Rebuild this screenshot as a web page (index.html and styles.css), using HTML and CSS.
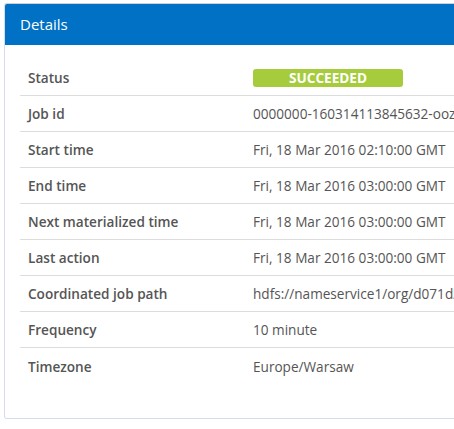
FILE: index.html
```html
<!DOCTYPE html>
<html>
<head>
<meta charset="utf-8">
<link rel="stylesheet" href="styles.css">
</head>
<body>
<div class="card">
  <div class="card-header">Details</div>
  <div class="card-body">
    <div class="row"><div class="label">Status</div><div class="value"><span class="badge">SUCCEEDED</span></div></div>
    <div class="row"><div class="label">Job id</div><div class="value">0000000-160314113845632-oozie-oozi-C</div></div>
    <div class="row"><div class="label">Start time</div><div class="value">Fri, 18 Mar 2016 02:10:00 GMT</div></div>
    <div class="row"><div class="label">End time</div><div class="value">Fri, 18 Mar 2016 03:00:00 GMT</div></div>
    <div class="row"><div class="label">Next materialized time</div><div class="value">Fri, 18 Mar 2016 03:00:00 GMT</div></div>
    <div class="row"><div class="label">Last action</div><div class="value">Fri, 18 Mar 2016 03:00:00 GMT</div></div>
    <div class="row"><div class="label">Coordinated job path</div><div class="value">hdfs://nameservice1/org/d071d/coordinator</div></div>
    <div class="row"><div class="label">Frequency</div><div class="value">10 minute</div></div>
    <div class="row last"><div class="label">Timezone</div><div class="value">Europe/Warsaw</div></div>
  </div>
</div>
</body>
</html>
```
FILE: styles.css
```css
html, body {
  margin: 0;
  padding: 0;
  overflow: hidden;
  background: #ffffff;
}
body {
  font-family: "Open Sans", "Liberation Sans", sans-serif;
  color: #555555;
  padding: 3px 0 0 4px;
}
.card {
  width: 560px;
  border: 1px solid #d6dbf2;
  border-top-color: #d0d0d0;
  border-radius: 3px;
  background: #ffffff;
  box-shadow: 5px 6px 0 #e6e6e6;
}
.card-header {
  background: #0071c5;
  color: #ffffff;
  height: 41px;
  line-height: 41px;
  padding-left: 15px;
  font-size: 15px;
  border-radius: 2px 2px 0 0;
}
.card-body {
  padding: 15px 0 34px 15px;
}
.row {
  display: grid;
  grid-template-columns: 233px 1fr;
  height: 36px;
  align-items: center;
  border-bottom: 1px solid #dddddd;
  box-sizing: border-box;
  font-size: 13.6px;
  white-space: nowrap;
}
.row.last {
  border-bottom: none;
}
.label {
  padding-left: 8px;
  font-weight: 600;
}
.badge {
  display: inline-block;
  width: 150px;
  height: 18px;
  line-height: 18px;
  text-align: center;
  background: #a6cc3d;
  color: #ffffff;
  font-weight: 700;
  border-radius: 3px;
  font-size: 13.6px;
}
```
